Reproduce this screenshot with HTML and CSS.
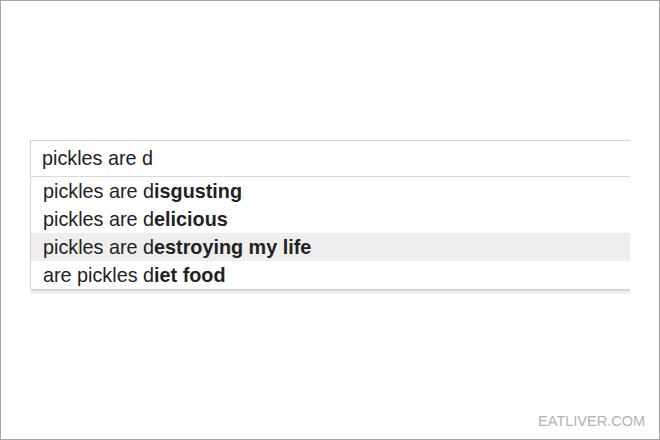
FILE: index.html
```html
<!DOCTYPE html>
<html>
<head>
<meta charset="utf-8">
<link rel="stylesheet" href="styles.css">
</head>
<body>
<div class="frame">
  <div class="search">
    <div class="input">pickles are d</div>
    <ul class="suggestions">
      <li class="row">pickles are d<b>isgusting</b></li>
      <li class="row">pickles are d<b>elicious</b></li>
      <li class="row active">pickles are d<b>estroying my life</b></li>
      <li class="row">are pickles d<b>iet food</b></li>
    </ul>
  </div>
  <div class="watermark">EATLIVER.COM</div>
</div>
</body>
</html>
```
FILE: styles.css
```css
html, body {
  margin: 0;
  padding: 0;
  background: #fff;
}
.frame {
  width: 660px;
  height: 440px;
  box-sizing: border-box;
  border: 1px solid #a6a6a6;
  display: flex;
  flex-direction: column;
  font-family: "Liberation Sans", Arial, sans-serif;
  color: #222;
}
.search {
  margin: 139px 0 0 29px;
  width: 600px;
}
.input {
  height: 35px;
  border-top: 1px solid #d0d0d0;
  border-bottom: 1px solid #d9d9d9;
  border-left: 1px solid #d0d0d0;
  padding-left: 11px;
  font-size: 19.8px;
  line-height: 35px;
}
.suggestions {
  list-style: none;
  margin: 0;
  padding: 0;
  border-left: 1px solid #d0d0d0;
}
.search::after {
  content: "";
  display: block;
  height: 6px;
  margin-left: 1px;
  background: linear-gradient(rgba(0, 0, 0, 0.2), rgba(0, 0, 0, 0.07) 50%, rgba(0, 0, 0, 0));
}
.row {
  height: 28px;
  line-height: 28px;
  padding-left: 12px;
  font-size: 19.8px;
}
.row b {
  font-weight: bold;
}
.row.active {
  background: #eeeeee;
}
.watermark {
  margin-top: auto;
  margin-bottom: 10px;
  align-self: flex-end;
  margin-right: 14px;
  font-size: 14.5px;
  color: #b3b3b3;
}
```
